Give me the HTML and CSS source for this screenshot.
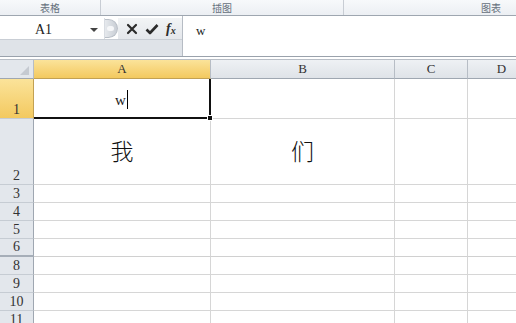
FILE: index.html
```html
<!DOCTYPE html>
<html lang="zh-CN">
<head>
    <meta charset="UTF-8">
    <title>Sheet</title>
    <link rel="stylesheet" href="styles.css">
</head>
<body>
    <div class="ribbon">
        <div class="group g1">表格</div>
        <div class="group g2">插图</div>
        <div class="group g3">图表</div>
    </div>

    <div class="formula-bar">
        <div class="left">
            <div class="name-row">
                <div class="name-box">
                    <span class="ref">A1</span>
                    <span class="caret-down"></span>
                </div>
                <div class="knob"><span class="knob-dot"></span></div>
                <div class="tools">
                    <svg width="12" height="12" viewBox="0 0 12 12"><path d="M2 2 L10 10 M10 2 L2 10" stroke="#2b2b2b" stroke-width="2.2" stroke-linecap="round"/></svg>
                    <svg width="14" height="12" viewBox="0 0 14 12"><path d="M1.5 6.5 L5 10 L12.5 2" fill="none" stroke="#2b2b2b" stroke-width="2.6" stroke-linejoin="round"/></svg>
                    <span class="fx">f<sub>x</sub></span>
                </div>
            </div>
            <div class="name-gap"></div>
        </div>
        <div class="formula">w</div>
    </div>

    <div class="sheet">
        <div class="corner"><span class="corner-tri"></span></div>
        <div class="col-head active">A</div>
        <div class="col-head">B</div>
        <div class="col-head">C</div>
        <div class="col-head">D</div>

        <div class="row-head active">1</div>
        <div class="cell selected"><span class="typed">w</span><span class="cursor"></span><span class="handle"></span></div>
        <div class="cell"></div>
        <div class="cell"></div>
        <div class="cell"></div>

        <div class="row-head tall">2</div>
        <div class="cell big">我</div>
        <div class="cell big">们</div>
        <div class="cell"></div>
        <div class="cell"></div>

        <div class="row-head">3</div><div class="cell"></div><div class="cell"></div><div class="cell"></div><div class="cell"></div>
        <div class="row-head">4</div><div class="cell"></div><div class="cell"></div><div class="cell"></div><div class="cell"></div>
        <div class="row-head">5</div><div class="cell"></div><div class="cell"></div><div class="cell"></div><div class="cell"></div>
        <div class="row-head hid">6</div><div class="cell hid"></div><div class="cell hid"></div><div class="cell hid"></div><div class="cell hid"></div>
        <div class="row-head">8</div><div class="cell"></div><div class="cell"></div><div class="cell"></div><div class="cell"></div>
        <div class="row-head">9</div><div class="cell"></div><div class="cell"></div><div class="cell"></div><div class="cell"></div>
        <div class="row-head">10</div><div class="cell"></div><div class="cell"></div><div class="cell"></div><div class="cell"></div>
        <div class="row-head">11</div><div class="cell"></div><div class="cell"></div><div class="cell"></div><div class="cell"></div>
    </div>
</body>
</html>
```

FILE: styles.css
```css
* {
    margin: 0;
    padding: 0;
    box-sizing: border-box;
}

body {
    width: 516px;
    height: 323px;
    overflow: hidden;
    background: #fff;
    font-family: "Liberation Serif", "Noto Sans CJK SC", serif;
    color: #222;
}

/* ribbon remnant */
.ribbon {
    height: 16px;
    display: flex;
    background: linear-gradient(#f7f9fb, #eceff3);
    border-bottom: 1px solid #9ea6b0;
}

.group {
    font-family: "Noto Sans CJK SC", sans-serif;
    font-size: 10px;
    color: #66707c;
    line-height: 15px;
    text-align: center;
    border-right: 1px solid #c8cdd4;
}

.g1 { width: 101px; }
.g2 { width: 243px; }
.g3 { flex: 1; border-right: none; text-align: right; padding-right: 15px; }

/* formula bar */
.formula-bar {
    height: 41px;
    display: flex;
    background: #fff;
    border-bottom: 1px solid #9aa2ac;
}

.left {
    width: 183px;
    display: flex;
    flex-direction: column;
    border-right: 1px solid #b6bcc4;
}

.name-row {
    height: 23px;
    padding-top: 2px;
    display: flex;
    align-items: center;
    background: #fff;
}

.name-gap {
    flex: 1;
    background: #dfe3e8;
    border-top: 1px solid #c9ced5;
}

.name-box {
    width: 105px;
    height: 21px;
    display: flex;
    align-items: center;
    border-right: 1px solid #d8dce2;
    position: relative;
}

.ref {
    font-size: 14px;
    margin-left: 35px;
    padding-top: 2px;
}

.caret-down {
    position: absolute;
    right: 6px;
    top: 10px;
    border-left: 4px solid transparent;
    border-right: 4px solid transparent;
    border-top: 4px solid #444;
}

.knob {
    width: 14px;
    height: 19px;
    border-radius: 0 10px 10px 0;
    margin-left: -1px;
    background: linear-gradient(90deg, #e8ebef, #c9ced5);
    border: 1px solid #b9bfc7;
    border-left: none;
    display: flex;
    align-items: center;
    justify-content: center;
}

.knob-dot {
    width: 7px;
    height: 5px;
    border-radius: 3px;
    background: #f6f7f9;
}

.tools {
    flex: 1;
    display: flex;
    align-items: center;
    gap: 7px;
    padding-left: 8px;
    background: linear-gradient(#f2f4f6, #e4e7eb);
    height: 21px;
}

.fx {
    font-family: "Liberation Serif", serif;
    font-style: italic;
    font-weight: bold;
    font-size: 14px;
    color: #2b2b2b;
}

.fx sub {
    font-size: 10px;
    vertical-align: -1px;
}

.formula {
    flex: 1;
    font-size: 13px;
    padding: 7px 0 0 13px;
    line-height: 16px;
}

/* grid */
.sheet {
    margin-top: 2px;
    display: grid;
    grid-template-columns: 34px 177px 184px 73px 68px;
    grid-template-rows: 19px 40px 66px repeat(8, 18px);
    border-top: 1px solid #b8bec6;
}

.corner {
    background: #e3e7ec;
    border-right: 1px solid #b7bdc5;
    border-bottom: 1px solid #9fa7b1;
    position: relative;
}

.corner-tri {
    position: absolute;
    right: 4px;
    bottom: 3px;
    border-left: 9px solid transparent;
    border-bottom: 9px solid #c5cad1;
}

.col-head {
    background: linear-gradient(#eef1f4, #dfe3e8);
    border-right: 1px solid #b7bdc5;
    border-bottom: 1px solid #9fa7b1;
    font-size: 13px;
    line-height: 18px;
    text-align: center;
    color: #333;
}

.col-head.active {
    background: linear-gradient(#fbe39a, #f3c95f);
    border-bottom-color: #c2a153;
}

.row-head {
    background: #e3e7ec;
    border-right: 1px solid #9fa7b1;
    border-bottom: 1px solid #c6ccd3;
    font-size: 14px;
    text-align: center;
    display: flex;
    align-items: flex-end;
    justify-content: center;
    line-height: 17px;
    color: #333;
}

.row-head.active {
    background: linear-gradient(#fbe39a, #f3c95f);
    border-right-color: #c2a153;
}

.row-head.hid {
    border-bottom: 2px solid #a6aeb8;
}

.cell {
    border-right: 1px solid #d6d6d6;
    border-bottom: 1px solid #d6d6d6;
}

.cell.hid {
    border-bottom-color: #d0d0d0;
}

.cell.selected {
    border-right: 2px solid #111;
    border-bottom: 2px solid #111;
    display: flex;
    align-items: flex-end;
    justify-content: center;
    padding-bottom: 9px;
    position: relative;
}

.typed {
    font-size: 15px;
    line-height: 15px;
}

.cursor {
    width: 1px;
    height: 19px;
    background: #000;
    margin-left: 1px;
    margin-bottom: -1px;
}

.handle {
    position: absolute;
    right: -4px;
    bottom: -4px;
    width: 6px;
    height: 6px;
    background: #111;
    border: 1px solid #fff;
}

.cell.big {
    font-family: "Noto Sans CJK SC", sans-serif;
    font-weight: 300;
    font-size: 23px;
    display: flex;
    align-items: center;
    justify-content: center;
    padding-bottom: 4px;
    color: #111;
}
```
